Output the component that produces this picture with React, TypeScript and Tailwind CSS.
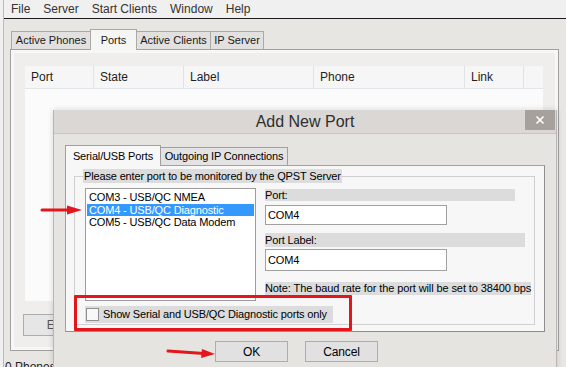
import React from "react";

const narrow = "font-['Liberation_Sans',sans-serif] text-[11px] tracking-[-0.15px] whitespace-nowrap";

function MainTab({ label, active, w }: { label: string; active?: boolean; w: string }) {
  if (active) {
    return (
      <div
        className={`${w} h-[21px] -mb-px bg-[#f5f5f4] border border-b-0 border-[#a9a9a9] flex items-start justify-center pt-[2px] relative z-10`}
      >
        {label}
      </div>
    );
  }
  return (
    <div
      className={`${w} h-[18px] bg-[#e2e1df] border border-b-0 border-[#a9a9a9] flex items-center justify-center`}
    >
      {label}
    </div>
  );
}

function HeaderCell({ label, w }: { label: string; w: string }) {
  return (
    <div className={`${w} h-full border-r border-[#dfe3ea] flex items-center pl-[6px] text-[12px] text-[#1e1e1e]`}>
      {label}
    </div>
  );
}

function Arrow({ className, d, head }: { className: string; d: string; head: string }) {
  return (
    <svg className={className} viewBox="0 0 60 20" fill="none">
      <path d={d} stroke="#e3161c" strokeWidth="3" strokeLinecap="round" />
      <polygon points={head} fill="#e3161c" />
    </svg>
  );
}

export default function App() {
  return (
    <div className="relative w-[566px] h-[367px] overflow-hidden bg-[#e8e6e3] font-['Liberation_Sans',sans-serif] text-[12px] text-[#1a1a1a]">
      {/* main QPST window */}
      <div className="flex h-full">
        <div className="w-[4px] bg-[#f0f0f0] border-r border-[#bdbbb8]" />
        <div className="flex-1 flex flex-col">
          <div className="h-[21px] bg-[#f0f0f0] border-b border-[#1c1c1c] flex items-center gap-[13px] pl-[7px] text-[12px] text-[#333]">
            <span>File</span>
            <span>Server</span>
            <span>Start Clients</span>
            <span>Window</span>
            <span>Help</span>
          </div>

          <div className="pl-[6px] pr-[7px] pt-[10px]">
            <div className="flex items-end h-[20px] pl-[1px] text-[11px] whitespace-nowrap">
              <MainTab label="Active Phones" w="w-[80px]" />
              <MainTab label="Ports" w="w-[47px] -ml-px" active />
              <MainTab label="Active Clients" w="w-[75px] -ml-px" />
              <MainTab label="IP Server" w="w-[54px] -ml-px" />
            </div>
            <div className="h-[302px] border border-[#a0a0a0] bg-[#f7f7f6] p-[3px]">
              <div className="h-full bg-[#efeeec] pt-[13px] pl-[11px] pr-[12px] flex flex-col">
                <div className="h-[235px] bg-[#fbfbfb] flex flex-col">
                  <div className="h-[23px] bg-[#f6f6f6] border-b border-[#e2e5ea] flex">
                    <HeaderCell label="Port" w="w-[69px]" />
                    <HeaderCell label="State" w="w-[90px]" />
                    <HeaderCell label="Label" w="w-[130px]" />
                    <HeaderCell label="Phone" w="w-[151px]" />
                    <HeaderCell label="Link" w="w-[59px]" />
                  </div>
                </div>
                <div className="mt-[13px] -ml-[2px] w-[68px] h-[22px] border border-[#adadad] bg-[#e6e6e6] flex items-center justify-center text-[#555]">
                  Edit
                </div>
              </div>
            </div>
            <div className="pt-[9px] -ml-[5px] text-[12px] leading-[14px] text-[#222]">0 Phones</div>
          </div>
        </div>
      </div>

      {/* Add New Port dialog */}
      <div className="absolute left-[53px] top-[110px] w-[504px] h-[270px] bg-[#e6e4e1] border-x border-[#b8b5b2] shadow-[0_0_6px_rgba(0,0,0,0.15)]">
        <div className="relative h-[24px] bg-[#dad7d4] border-b border-[#c8c5c2] flex items-center justify-center text-[16px] text-[#2e2e2e]">
          Add New Port
          <div className="absolute right-[1px] top-0 w-[30px] h-[20px] bg-[#a7a19d] flex items-center justify-center">
            <svg width="10" height="10" viewBox="0 0 10 10">
              <path d="M1.5 1.5 L8.5 8.5 M8.5 1.5 L1.5 8.5" stroke="#fff" strokeWidth="1.6" />
            </svg>
          </div>
        </div>

        <div className={`pl-[11px] pt-[11px] ${narrow} text-black`}>
          <div className="flex items-end h-[20px]">
            <div className="w-[96px] h-[21px] -mb-px bg-[#f7f7f7] border border-b-0 border-[#a0a0a0] flex items-center justify-center relative z-10">
              Serial/USB Ports
            </div>
            <div className="w-[127px] h-[18px] bg-[#e3e3e3] border border-b-0 border-l-0 border-[#a0a0a0] flex items-center justify-center">
              Outgoing IP Connections
            </div>
          </div>
          <div className="w-[480px] h-[167px] bg-[#f7f7f7] border border-[#a0a0a0] border-r-[#8d8d8d] border-b-[#8d8d8d] pl-[8px] pt-[3px]">
            <fieldset className="w-[461px] h-[156px] border border-[#d0d0d0] pl-[10px]">
              <legend className="ml-[-2px] px-[1px] bg-[#dcdcdc] leading-[14px]">
                Please enter port to be monitored by the QPST Server
              </legend>
              <div className="flex gap-[9px] pt-[5px]">
                <div className="w-[171px] h-[113px] bg-white border border-[#9c9c9c] pt-[2px] px-[1px] leading-[12.6px]">
                  <div className="pl-[2px]">COM3 - USB/QC NMEA</div>
                  <div className="pl-[2px] bg-[#3399ff] text-white">COM4 - USB/QC Diagnostic</div>
                  <div className="pl-[2px]">COM5 - USB/QC Data Modem</div>
                </div>
                <div className="flex flex-col pt-[1px]">
                  <div className="w-[250px] h-[12px] bg-[#dcdcdc] leading-[12px]">Port:</div>
                  <div className="mt-[4px] w-[182px] h-[20px] bg-white border border-[#a0a0a0] flex items-center pl-[2px]">
                    COM4
                  </div>
                  <div className="mt-[8px] w-[260px] h-[14px] bg-[#dcdcdc] leading-[14px]">Port Label:</div>
                  <div className="mt-[2px] w-[182px] h-[22px] bg-white border border-[#a0a0a0] flex items-center pl-[2px]">
                    COM4
                  </div>
                  <div className="mt-[11px] w-fit h-[13px] bg-[#dcdcdc] leading-[13px] tracking-[-0.1px]">
                    Note: The baud rate for the port will be set to 38400 bps
                  </div>
                </div>
              </div>
              <div className="mt-[5px] w-[248px] h-[17px] bg-[#dcdcdc] flex items-center gap-[4px] pl-[1px]">
                <div className="w-[13px] h-[13px] bg-[#f8f8f8] border border-[#8f8f8f]" />
                <span>Show Serial and USB/QC Diagnostic ports only</span>
              </div>
            </fieldset>
          </div>
          <div className="flex gap-[17px] pl-[150px] pt-[9px] text-[12px]">
            <div className="w-[73px] h-[21px] bg-[#e1e1e1] border border-[#adadad] flex items-center justify-center">OK</div>
            <div className="w-[73px] h-[21px] bg-[#e1e1e1] border border-[#adadad] flex items-center justify-center">Cancel</div>
          </div>
        </div>
      </div>

      {/* annotations */}
      <div className="absolute left-[74px] top-[295px] w-[278px] h-[36px] border-[3px] border-[#e3161c] rounded-[1px]" />
      <Arrow className="absolute left-[38px] top-[200px] w-[60px] h-[20px]" d="M4 10 L32 10" head="29,5.5 44,10 29,14.5" />
      <Arrow className="absolute left-[164px] top-[343px] w-[60px] h-[20px]" d="M4 8 L40 10.5" head="38,6 51,11 37,15" />
    </div>
  );
}
